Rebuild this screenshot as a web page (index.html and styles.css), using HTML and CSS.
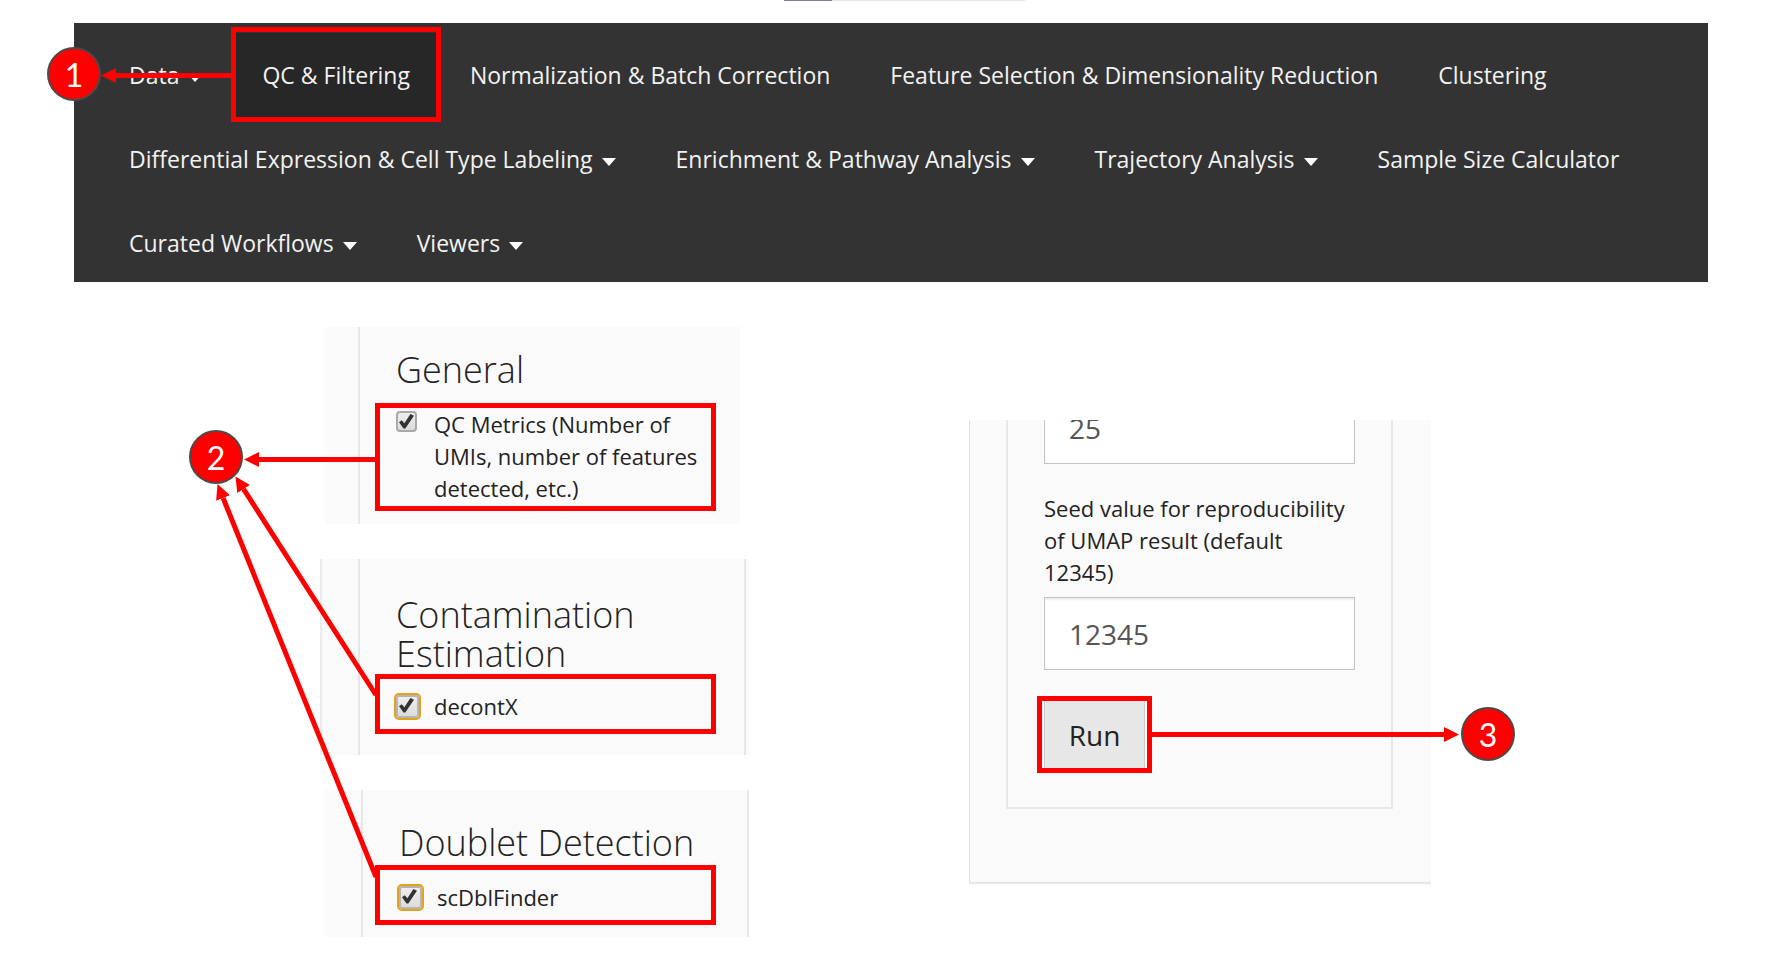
FILE: index.html
```html
<!DOCTYPE html>
<html lang="en">
<head>
<meta charset="utf-8">
<title>QC &amp; Filtering</title>
<link rel="stylesheet" href="styles.css">
</head>
<body>
<div class="page">
  <div class="top-strip"></div>
  <nav class="navbar">
    <ul class="nav-list">
      <li><a class="nav-link" href="#data">Data <span class="caret"></span></a></li>
      <li><a class="nav-link active" href="#qc">QC &amp; Filtering</a></li>
      <li><a class="nav-link" href="#norm">Normalization &amp; Batch Correction</a></li>
      <li><a class="nav-link" href="#features">Feature Selection &amp; Dimensionality Reduction</a></li>
      <li><a class="nav-link" href="#clustering">Clustering</a></li>
      <li><a class="nav-link" href="#de">Differential Expression &amp; Cell Type Labeling <span class="caret"></span></a></li>
      <li><a class="nav-link" href="#enrichment">Enrichment &amp; Pathway Analysis <span class="caret"></span></a></li>
      <li><a class="nav-link" href="#trajectory">Trajectory Analysis <span class="caret"></span></a></li>
      <li><a class="nav-link" href="#size">Sample Size Calculator</a></li>
      <li><a class="nav-link" href="#workflows">Curated Workflows <span class="caret"></span></a></li>
      <li><a class="nav-link" href="#viewers">Viewers <span class="caret"></span></a></li>
    </ul>
  </nav>

  <main class="content">
    <div class="checks">
      <section class="panel general">
        <div class="panel-body">
          <h2 class="title">General</h2>
          <label class="option tall"><input class="check" type="checkbox" checked><span>QC Metrics (Number of UMIs, number of features detected, etc.)</span></label>
        </div>
      </section>
      <section class="panel contamination">
        <div class="panel-body">
          <h2 class="title">Contamination Estimation</h2>
          <label class="option"><input class="check focused" type="checkbox" checked><span>decontX</span></label>
        </div>
      </section>
      <section class="panel doublet">
        <div class="panel-body">
          <h2 class="title">Doublet Detection</h2>
          <label class="option"><input class="check focused" type="checkbox" checked><span>scDblFinder</span></label>
        </div>
      </section>
    </div>

    <section class="params">
      <form class="params-body">
        <input class="field" type="text" value="25" aria-label="Number of neighbors">
        <label class="field-label" for="seed">Seed value for reproducibility of UMAP result (default 12345)</label>
        <input class="field" id="seed" type="text" value="12345">
        <div class="run-frame"><button class="run" type="button">Run</button></div>
      </form>
    </section>
  </main>

  <svg class="arrows" width="1770" height="971" viewBox="0 0 1770 971" aria-hidden="true">
    <defs>
      <marker id="head" markerUnits="userSpaceOnUse" markerWidth="15" markerHeight="15" refX="0" refY="7.5" orient="auto">
        <path d="M0 0L15 7.5L0 15Z" fill="#f00"/>
      </marker>
    </defs>
    <g stroke="#f00" stroke-width="5" fill="none">
      <path d="M235 75.500H116" marker-end="url(#head)"/>
      <path d="M377 459.500H259" marker-end="url(#head)"/>
      <path d="M376 695L243.600 489.100" marker-end="url(#head)"/>
      <path d="M376 877L223.100 498" marker-end="url(#head)"/>
      <path d="M1150 734.500H1444" marker-end="url(#head)"/>
    </g>
  </svg>
  <span class="badge one">1</span>
  <span class="badge two">2</span>
  <span class="badge three">3</span>
</div>
</body>
</html>
```
FILE: styles.css
```css
* { box-sizing: border-box; }

body {
  margin: 0;
  background: #fff;
  color: #222;
  font-family: "Open Sans", "Noto Sans", sans-serif;
}

.page { position: relative; overflow: hidden; padding: 0 62px 34px 74px; }

.top-strip {
  width: 241px;
  height: 1px;
  margin: 0 0 22px 710px;
  background: linear-gradient(to right, #7d7d9c 48px, #e6e6e6 48px);
}

.navbar { background: #333; padding: 10px 25px 0; overflow: hidden; }

.nav-list {
  display: flex;
  flex-wrap: wrap;
  list-style: none;
  margin: 0 0 -3px;
  padding: 0;
}

.nav-link {
  position: relative;
  display: flex;
  align-items: center;
  gap: 9px;
  height: 84px;
  padding: 0 30px;
  color: #f2f2f2;
  font-size: 23px;
  font-weight: 400;
  text-decoration: none;
  white-space: nowrap;
}

.nav-link.active { background: #272727; }

.nav-link.active::after {
  content: "";
  position: absolute;
  inset: -6px -1px -5px;
  border: 5px solid #f00;
}

.caret {
  border: 7px solid transparent;
  border-top: 8px solid #fff;
  border-bottom: 0;
  margin-top: 5px;
}

.content { display: flex; align-items: flex-start; padding-left: 246px; }

.checks { flex: 0 0 649px; }

.panel { background: #fafafa; }

.panel-body { border-left: 2px solid #e7e7e7; }

.title {
  margin: 0;
  padding: 0 60px 0 36px;
  font-size: 36px;
  font-weight: 300;
  line-height: 39px;
}

.option {
  display: flex;
  align-items: flex-start;
  width: 341px;
  min-height: 60px;
  padding: 11px 0 7px 16px;
  border: 5px solid #f00;
  font-size: 22px;
  line-height: 32px;
}

.general { width: 415px; margin: 45px 0 0 5px; padding-left: 33px; }
.general .panel-body { padding: 23px 0 13px 15px; }
.general .title { padding-left: 21px; margin-bottom: 14px; }
.option.tall { height: 108px; padding-top: 0; }

.contamination {
  width: 429px;
  margin-top: 35px;
  padding: 0 3px 0 36px;
  border-left: 2px solid #ebebeb;
}
.contamination .panel-body { padding: 36px 0 21px 15px; border-right: 2px solid #e7e7e7; }
.contamination .title { padding-left: 21px; margin-bottom: 1px; }

.doublet { width: 424px; margin: 35px 0 0 5px; padding-left: 36px; }
.doublet .panel-body { padding: 33px 0 12px 12px; border-right: 2px solid #e7e7e7; }
.doublet .title { padding: 0 0 0 24px; margin-bottom: 3px; }
.doublet .option { padding-left: 19px; }

.check {
  appearance: none;
  flex: none;
  width: 21px;
  height: 21px;
  margin: 3px 17px 0 0;
  border: 2px solid #a9a9a9;
  border-radius: 4px;
  background: linear-gradient(#eee, #dcdcdc);
}

.check::after {
  content: "";
  display: block;
  height: 15px;
  margin: 1px;
  background: #333;
  clip-path: polygon(0 55%, 18% 42%, 36% 62%, 76% 0, 100% 12%, 42% 96%, 30% 96%);
}

.check.focused {
  width: 23px;
  height: 23px;
  margin: 5px 15px 0 0;
  outline: 2px solid #e5a11a;
  border-color: #b5b5b5;
  border-radius: 3px;
}

.check.focused::after { width: 15px; }

.params {
  width: 462px;
  margin-top: 138px;
  padding: 0 38px 73px 36px;
  overflow: hidden;
  background: #fafafa;
  border-left: 1px solid #e0e0e0;
  border-bottom: 2px solid #e6e6e6;
}

.params-body {
  padding: 0 36px 34px;
  border: 2px solid #e7e7e7;
  border-top: 0;
}

.field {
  display: block;
  width: 100%;
  height: 73px;
  padding: 0 24px;
  border: 1px solid #c4c4c4;
  background: #fff;
  box-shadow: inset 0 2px 2px #eee;
  color: #555;
  font: 28px "Open Sans", sans-serif;
}

.field:first-child { margin-top: -29px; }

.field-label {
  display: block;
  margin: 28px 0 9px;
  font-size: 22px;
  line-height: 32px;
}

.run-frame {
  width: 115px;
  margin: 26px 0 0 -7px;
  padding: 0 2px;
  border: 5px solid #f00;
  background: #fafafa;
}

.run {
  display: block;
  width: 100%;
  height: 67px;
  padding: 0;
  border: 0 solid #ccc;
  border-width: 0 1px;
  background: #e7e7e7;
  color: #222;
  font: 28px "Open Sans", sans-serif;
}

.arrows { position: absolute; left: 0; top: 0; pointer-events: none; }

.badge {
  position: absolute;
  width: 54px;
  height: 54px;
  border: 2px solid #4a4a4a;
  border-radius: 50%;
  background: #f00;
  color: #fff;
  font: 32px/52px Lato, sans-serif;
  text-align: center;
}

.badge.one { left: 47px; top: 47px; }
.badge.two { left: 189px; top: 430px; }
.badge.three { left: 1461px; top: 707px; }
```
